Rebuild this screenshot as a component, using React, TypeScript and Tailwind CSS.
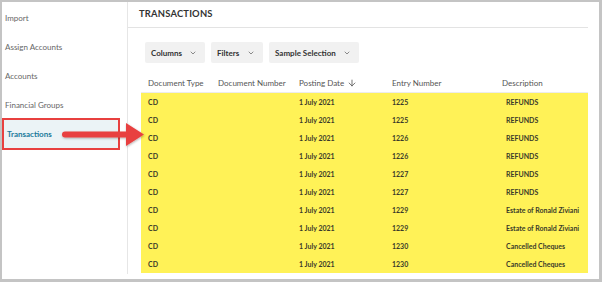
import { ChevronDown, ArrowDown } from "lucide-react";

const navItems = ["Import", "Assign Accounts", "Accounts", "Financial Groups"];

const rows = [
    { type: "CD", date: "1 July 2021", entry: "1225", desc: "REFUNDS" },
    { type: "CD", date: "1 July 2021", entry: "1225", desc: "REFUNDS" },
    { type: "CD", date: "1 July 2021", entry: "1226", desc: "REFUNDS" },
    { type: "CD", date: "1 July 2021", entry: "1226", desc: "REFUNDS" },
    { type: "CD", date: "1 July 2021", entry: "1227", desc: "REFUNDS" },
    { type: "CD", date: "1 July 2021", entry: "1227", desc: "REFUNDS" },
    { type: "CD", date: "1 July 2021", entry: "1229", desc: "Estate of Ronald Ziviani" },
    { type: "CD", date: "1 July 2021", entry: "1229", desc: "Estate of Ronald Ziviani" },
    { type: "CD", date: "1 July 2021", entry: "1230", desc: "Cancelled Cheques" },
    { type: "CD", date: "1 July 2021", entry: "1230", desc: "Cancelled Cheques" },
];

const cols = "grid grid-cols-[70px_81px_93px_110px_92px] whitespace-nowrap";

function Dropdown({ label, width }: { label: string; width: string }) {
    return (
        <button className={`${width} h-[21px] bg-[#f1f1f1] rounded-[2px] flex items-center justify-between pl-[6px] pr-[8px] text-[8px] font-bold text-[#333] whitespace-nowrap`}>
            {label}
            <ChevronDown className="w-[8px] h-[8px] text-[#555]" strokeWidth={2} />
        </button>
    );
}

export default function App() {
    return (
        <div
            className="relative w-[602px] h-[282px] bg-white border-2 border-r-[3px] border-b-[3px] border-[#c4c4c4] flex pb-[5px] overflow-hidden"
            style={{ fontFamily: "Lato, 'Noto Sans', sans-serif" }}
        >
            {/* Sidebar */}
            <div className="w-[126px] shrink-0 border-r border-[#e6e6e6] pt-[1px]">
                {navItems.map((item) => (
                    <div key={item} className="h-[29px] flex items-center pl-[3px] text-[8px] text-[#666]">
                        {item}
                    </div>
                ))}
                <div className="mt-[-1px] w-[118px] h-[32px] border-2 border-[#e8403f] bg-[#ebf3f6] flex items-center pl-[3px] text-[8px] font-bold text-[#1b7a9b]">
                    Transactions
                </div>
            </div>

            {/* Main */}
            <div className="flex-1 pr-[11px]">
                <div className="h-[26px] border-b border-[#e3e3e3] flex items-center pl-[11px] text-[9.4px] font-bold text-[#333] tracking-[0.2px]">
                    TRANSACTIONS
                </div>

                <div className="pl-[17px] mt-[14px] flex gap-[6px]">
                    <Dropdown label="Columns" width="w-[60px]" />
                    <Dropdown label="Filters" width="w-[52px]" />
                    <Dropdown label="Sample Selection" width="w-[90px]" />
                </div>

                <div className="ml-[13px] mt-[10px]">
                    <div className={`${cols} h-[20px] items-center border-b border-[#ececec] text-[8px] text-[#555]`}>
                        <div className="pl-[7px]">Document Type</div>
                        <div className="pl-[7px]">Document Number</div>
                        <div className="pl-[7px] flex items-center gap-[3px]">
                            Posting Date
                            <ArrowDown className="w-[10px] h-[10px] text-[#444]" strokeWidth={1.8} />
                        </div>
                        <div className="pl-[7px]">Entry Number</div>
                        <div className="pl-[7px]">Description</div>
                    </div>
                    <div className="bg-[#fff257]">
                        {rows.map((r, i) => (
                            <div key={i} className={`${cols} h-[18px] items-center text-[7px] font-bold text-[#3a3a2a]`}>
                                <div className="pl-[7px]">{r.type}</div>
                                <div></div>
                                <div className="pl-[7px]">{r.date}</div>
                                <div className="pl-[7px]">{r.entry}</div>
                                <div className="pl-[11px]">{r.desc}</div>
                            </div>
                        ))}
                    </div>
                </div>
            </div>

            {/* Annotation arrow */}
            <svg className="absolute left-[58px] top-[119px]" width="86" height="28" viewBox="0 0 86 28">
                <defs>
                    <filter id="sh" x="-10%" y="-20%" width="120%" height="150%">
                        <feDropShadow dx="0.5" dy="1" stdDeviation="0.8" floodColor="#000" floodOpacity="0.3" />
                    </filter>
                </defs>
                <g filter="url(#sh)" fill="#e8403f">
                    <path d="M5 10.5 H68 V16.5 H5 A3 3 0 0 1 5 10.5 Z" />
                    <path d="M66 2 L84 13.5 L66 25 Z" />
                </g>
            </svg>
        </div>
    );
}
